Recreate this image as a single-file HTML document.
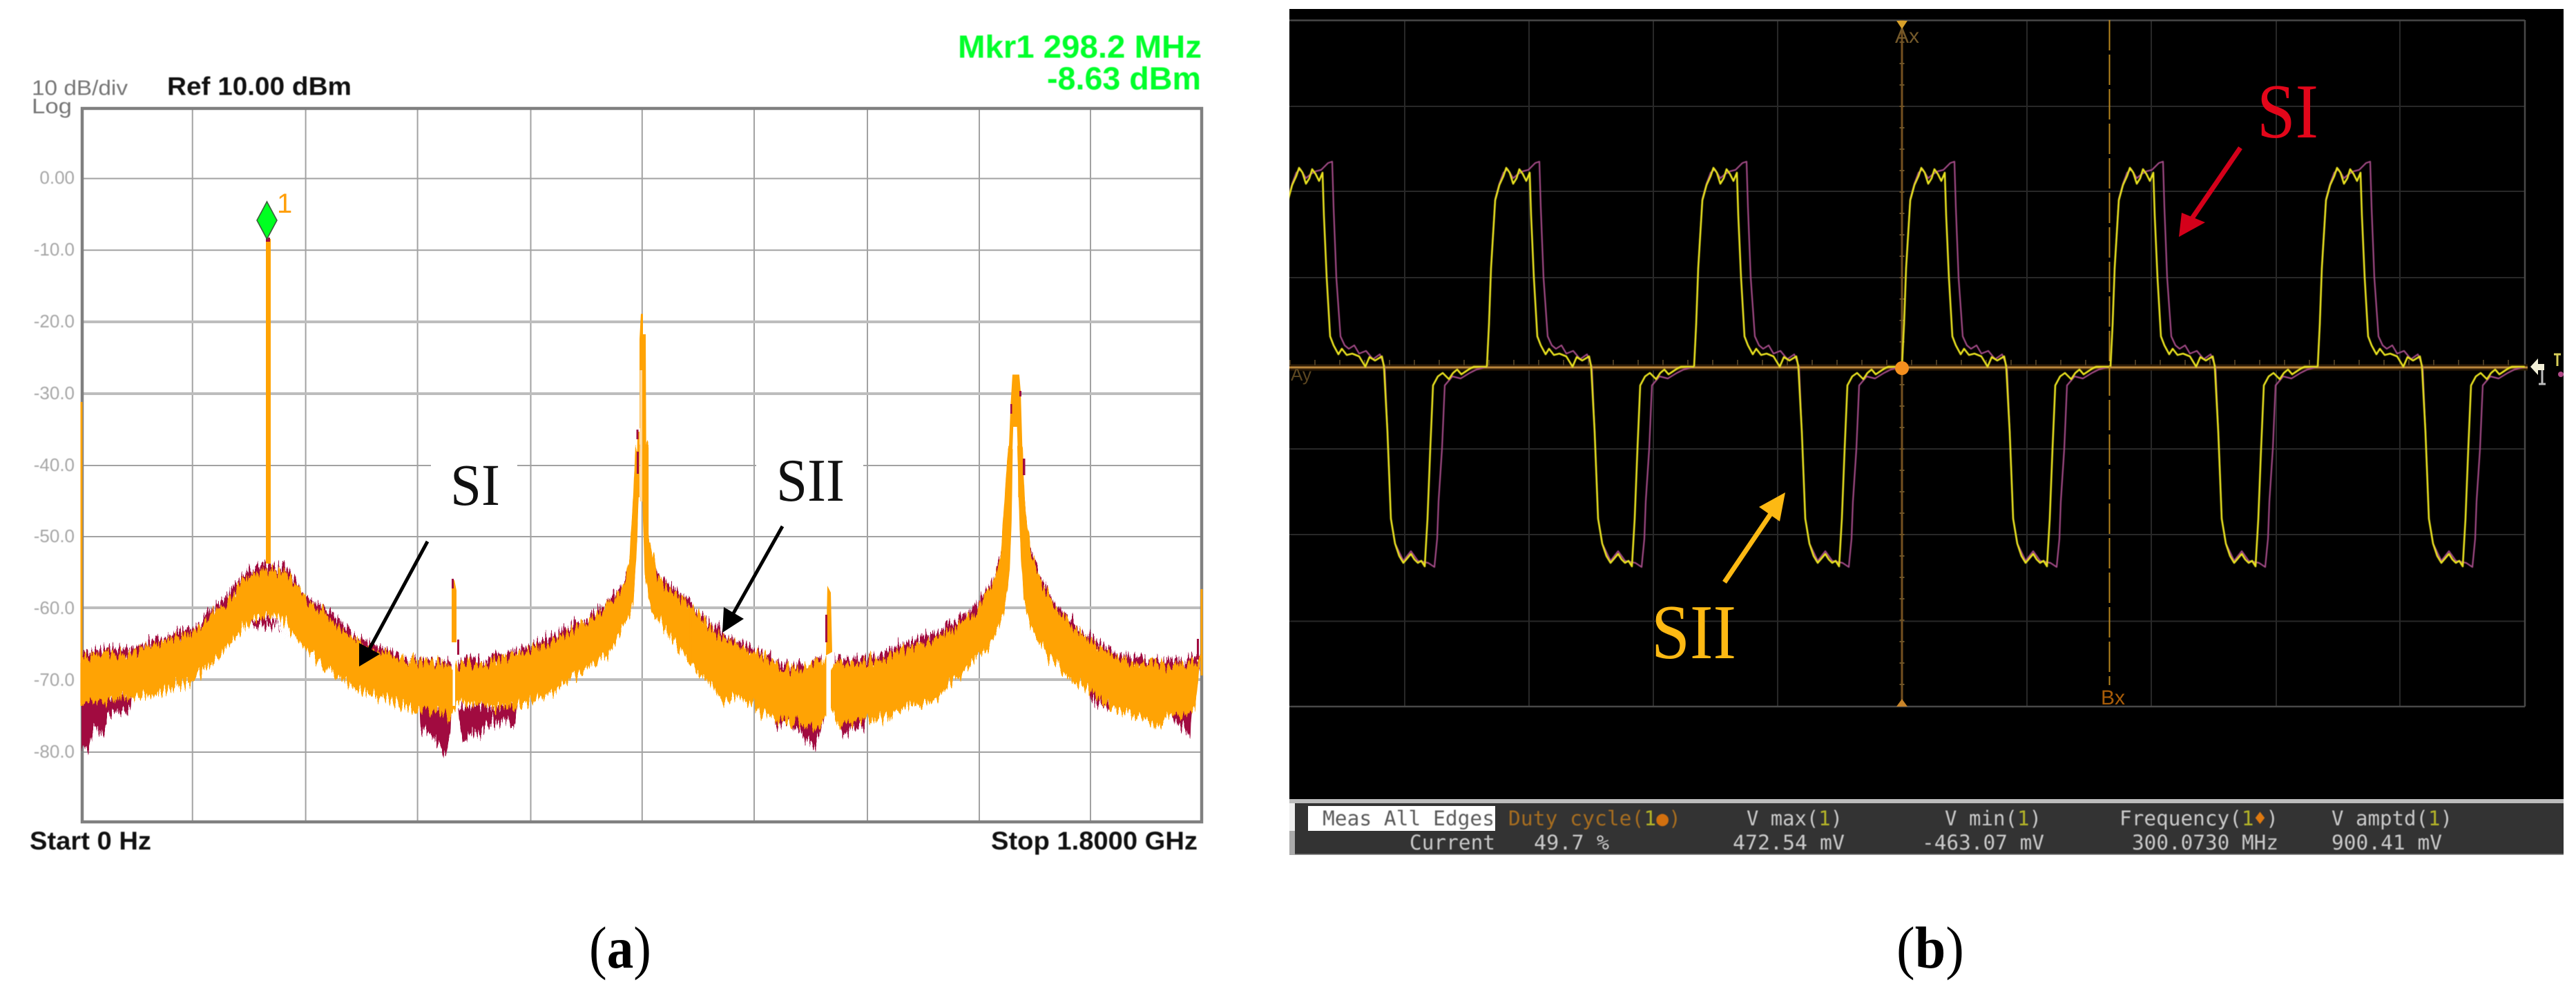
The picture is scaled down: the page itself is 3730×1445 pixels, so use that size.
<!DOCTYPE html>
<html lang="en"><head><meta charset="utf-8"><title>Spectrum and waveform</title>
<style>
html,body{margin:0;padding:0;background:#fff;width:3730px;height:1445px;overflow:hidden}
svg{display:block}
.s{font-family:"Liberation Sans",sans-serif}
.t{font-family:"Liberation Serif",serif}
.m{font-family:"DejaVu Sans Mono","Liberation Mono",monospace;font-size:29.6px}
</style></head><body>
<svg xmlns="http://www.w3.org/2000/svg" width="3730" height="1445" viewBox="0 0 3730 1445">
<defs>
<filter id="j1" filterUnits="userSpaceOnUse" x="100" y="630" width="1660" height="480" color-interpolation-filters="sRGB">
<feTurbulence type="fractalNoise" baseFrequency="0.3 0.012" numOctaves="2" seed="4" result="n"/>
<feColorMatrix in="n" type="matrix" values="1 0 0 0 0 0 0 0 0 0.5 0 0 0 0 0.5 0 0 0 0 1" result="m"/>
<feDisplacementMap in="SourceGraphic" in2="m" scale="40" xChannelSelector="G" yChannelSelector="R"/>
</filter>
<filter id="j2" filterUnits="userSpaceOnUse" x="100" y="630" width="1660" height="480" color-interpolation-filters="sRGB">
<feTurbulence type="fractalNoise" baseFrequency="0.4 0.015" numOctaves="2" seed="11" result="n"/>
<feColorMatrix in="n" type="matrix" values="1 0 0 0 0 0 0 0 0 0.5 0 0 0 0 0.5 0 0 0 0 1" result="m"/>
<feDisplacementMap in="SourceGraphic" in2="m" scale="40" xChannelSelector="G" yChannelSelector="R"/>
</filter>
<clipPath id="sc"><rect x="1867" y="13" width="1793" height="1140"/></clipPath>
<polyline id="yel" fill="none" stroke="#e9e21f" stroke-width="2.6" stroke-linejoin="round" points="0,531 3,470 6,388 12,290 18,268 24,255 28,243 33,250 38,266 43,258 47,245 52,252 57,262 62,250 64,312 68,402 73,487 78,500 85,513 90,505 97,514 105,512 115,516 124,531 130,517 138,522 148,516 151,531 156,625 158,675 161,751 167,787 173,805 179,815 185,808 190,802 195,810 200,815 205,812 210,820 214,751 218,650 222,558 229,545 236,540 245,549 251,540 257,535 263,542 269,538 275,534 281,531 300,531"/>
<polyline id="mag" fill="none" stroke="#a24a86" stroke-width="2.2" stroke-linejoin="round" points="0,531 3,470 6,388 12,288 18,266 24,250 30,245 38,258 45,252 52,248 60,246 70,236 76,234 78,300 82,402 88,487 94,500 100,505 108,500 115,512 125,508 135,520 145,513 152,531 156,625 158,675 161,751 167,787 179,812 190,798 200,812 215,815 224,821 228,780 230,726 235,650 239,558 250,545 262,548 275,540 285,535 300,531"/>
</defs>

<rect width="3730" height="1445" fill="#fff"/>

<!-- LEFT CHART -->
<g fill="none" stroke="#a2a2a2" stroke-width="2">
<path d="M278.7 157V1190M442.6 157V1190M604.6 157V1190M768.5 157V1190M929.8 157V1190M1092 157V1190M1256 157V1190M1418 157V1190M1579 157V1190"/>
<path d="M119 258.5H1740M119 362.3H1740M119 674H1740M119 777H1740M119 1089H1740"/>
</g>
<path d="M119 466H1740M119 570H1740M119 880H1740M119 984H1740" stroke="#bdbdbd" stroke-width="4" fill="none"/>
<rect x="119" y="157" width="1621" height="1033" fill="none" stroke="#808080" stroke-width="4.5"/>

<!-- white label backgrounds -->
<rect x="624" y="660" width="125" height="85" fill="#fff"/>
<rect x="1095" y="655" width="155" height="80" fill="#fff"/>

<!-- crimson noise -->
<g filter="url(#j2)" fill="#a10b40">
<g transform="translate(0,650) scale(.6378,.5071)">
<polygon points="185,585 240,570 300,570 350,545 400,525 440,510 470,470 520,415 550,355 600,332 650,335 690,415 740,462 800,528 860,565 920,600 1000,605 1025,615 1025,655 1000,645 920,640 860,605 800,568 740,502 690,455 650,375 600,372 550,395 520,455 470,510 440,550 400,565 350,585 300,610 240,610 185,625"/>
<polygon points="1040,605 1100,600 1200,565 1280,520 1360,458 1420,380 1436,310 1440,400 1370,500 1290,560 1210,605 1100,640 1040,645"/>
<polygon points="1470,330 1490,345 1520,395 1568,432 1568,470 1520,435 1490,385 1475,370"/>
<polygon points="185,700 185,860 200,860 215,790 235,820 245,750 295,745 300,700"/>
<polygon points="950,700 955,800 975,812 1000,850 1012,878 1022,820 1025,740"/>
<polygon points="1040,730 1050,838 1070,812 1090,818 1110,780 1170,788 1175,730"/>
<polygon points="550,480 600,505 640,515 680,560 600,470"/>
</g>
<g transform="translate(1000,650) scale(.5421,.5071)">
<polygon points="0,432 50,500 100,535 150,560 200,585 250,615 300,620 350,595 350,635 300,660 250,655 200,625 150,600 100,575 50,540 0,472"/>
<polygon points="385,600 430,600 500,590 560,560 640,530 700,500 760,450 810,370 830,290 838,350 815,410 765,490 705,540 645,570 565,600 505,630 430,640 385,640"/>
<polygon points="905,275 940,380 980,455 1040,515 1100,560 1150,590 1250,605 1340,600 1360,585 1360,625 1340,640 1250,645 1150,630 1100,600 1040,555 980,495 940,420 905,315"/>
<polygon points="225,740 225,795 260,770 290,810 330,850 345,810 358,760 358,700"/>
<polygon points="395,740 405,820 440,795 460,795 490,745"/>
<polygon points="1280,745 1300,790 1335,818 1340,740"/>
<polygon points="1060,660 1070,710 1110,745 1120,720"/>
</g>
</g>

<!-- orange noise -->
<g filter="url(#j1)" fill="#ffa304" stroke="#ffa304" stroke-width="5">
<g transform="translate(0,650) scale(.6378,.5071)">
<polygon points="185,600 240,585 300,585 350,560 400,540 440,525 470,490 520,430 550,375 600,350 650,355 690,430 740,480 800,545 860,580 920,610 1000,612 1025,625 1040,615 1100,610 1200,580 1280,535 1360,475 1420,395 1432,310 1440,130 1445,0 1450,0 1448,140 1442,310 1435,450 1380,585 1300,650 1260,690 1170,740 1100,735 1040,720 1020,760 960,740 900,720 815,690 750,635 700,580 640,480 600,470 550,510 500,590 430,665 350,700 300,705 240,720 185,725"/>
<polygon points="1458,0 1470,0 1470,250 1490,365 1520,410 1568,450 1568,610 1520,530 1480,460 1466,350 1462,200"/>
</g>
<g transform="translate(1000,650) scale(.5421,.5071)">
<polygon points="0,450 50,515 100,550 150,575 200,600 250,630 300,632 350,610 385,612 430,615 500,605 560,580 640,550 700,520 760,470 810,385 830,305 838,185 845,60 850,0 858,0 855,200 850,350 840,430 830,480 800,560 760,600 700,660 650,720 580,730 510,770 450,770 400,780 380,750 360,760 340,800 300,780 250,780 190,750 130,700 90,720 50,660 0,610"/>
<polygon points="875,0 885,0 890,150 905,290 940,395 980,470 1040,530 1100,575 1150,605 1250,620 1340,615 1360,600 1355,640 1345,745 1240,780 1180,760 1120,740 1070,690 1020,660 960,590 920,530 892,440 882,250"/>
</g>
</g>

<!-- spikes -->
<rect x="385" y="346" width="7" height="470" fill="#ffa304"/>
<rect x="385" y="344" width="6" height="6" fill="#a10b40"/>
<rect x="116.5" y="582" width="3" height="440" fill="#ffa304"/>
<rect x="1738.5" y="853" width="3" height="125" fill="#ffa304"/>
<rect x="1733" y="925" width="3" height="30" fill="#a10b40"/>
<polygon points="921.6,720 923,625 926,625 926,491 928,454.5 931,454.5 931,484 935,484 936,720 931,720 930,620 926,620 926,720" fill="#ffa304"/>
<rect x="926.5" y="536" width="3.5" height="190" fill="#ffd79a"/>
<rect x="921.5" y="622" width="3" height="14" fill="#a10b40"/>
<rect x="922" y="654" width="3" height="32" fill="#a10b40"/>
<polygon points="1460.7,720 1460.7,652 1463.4,585 1466,542.4 1475.9,542.4 1478,567 1479.7,625 1482.4,720 1474.3,720 1474.3,670 1472.6,618 1467.2,618 1466,652 1465,720" fill="#ffa304"/>
<rect x="1481" y="664" width="3.5" height="24" fill="#a10b40"/>
<rect x="1463" y="585" width="2.5" height="14" fill="#a10b40"/>
<rect x="1476" y="566" width="3" height="8" fill="#a10b40"/>
<polygon points="654,840 658,840 661,855 661,930 654,930" fill="#ffa304"/>
<rect x="654" y="838" width="3" height="14" fill="#a10b40"/>
<rect x="662" y="926" width="3" height="22" fill="#a10b40"/>
<rect x="655.5" y="934" width="3.5" height="88" fill="#fff"/>
<polygon points="1198,848 1203,858 1205,944 1196,949" fill="#ffa304"/>
<rect x="1195" y="890" width="3" height="40" fill="#a10b40"/>
<rect x="1196.5" y="949" width="6.5" height="92" fill="#fff"/>

<!-- marker -->
<polygon points="386.5,292 401,319 386.5,346 372,319" fill="#00ff21" stroke="#3d5c3d" stroke-width="1.6"/>
<text class="s" x="401" y="308" font-size="40" fill="#ff9f0a">1</text>

<!-- annotations left -->
<text class="t" x="652" y="731" font-size="86" textLength="72" lengthAdjust="spacingAndGlyphs" fill="#111">SI</text>
<text class="t" x="1124" y="725" font-size="88" textLength="99" lengthAdjust="spacingAndGlyphs" fill="#111">SII</text>
<line x1="619" y1="784" x2="532" y2="945" stroke="#000" stroke-width="5"/>
<polygon points="520,965 520,931 550,947" fill="#000"/>
<line x1="1133" y1="762" x2="1058" y2="895" stroke="#000" stroke-width="5"/>
<polygon points="1046,916 1048,879 1077,896" fill="#000"/>

<!-- chart labels -->
<g class="s" style="filter:blur(.6px)">
<text x="46" y="137.5" font-size="31" textLength="139" lengthAdjust="spacingAndGlyphs" fill="#777">10 dB/div</text>
<text x="46" y="164" font-size="31" textLength="58" lengthAdjust="spacingAndGlyphs" fill="#777">Log</text>
<text x="242" y="137.5" font-size="37" font-weight="700" textLength="267" lengthAdjust="spacingAndGlyphs" fill="#111">Ref 10.00 dBm</text>
<text x="1387" y="83.5" font-size="46" font-weight="700" textLength="353" lengthAdjust="spacingAndGlyphs" fill="#00ff2a">Mkr1 298.2 MHz</text>
<text x="1516" y="129.5" font-size="46" font-weight="700" textLength="223" lengthAdjust="spacingAndGlyphs" fill="#00ff2a">-8.63 dBm</text>
<text x="43" y="1230" font-size="37" font-weight="700" textLength="176" lengthAdjust="spacingAndGlyphs" fill="#111">Start 0 Hz</text>
<text x="1435" y="1230" font-size="37" font-weight="700" textLength="299" lengthAdjust="spacingAndGlyphs" fill="#111">Stop 1.8000 GHz</text>
<g font-size="26" fill="#a6a6a6" text-anchor="end">
<text x="108" y="266">0.00</text>
<text x="108" y="370">-10.0</text>
<text x="108" y="474">-20.0</text>
<text x="108" y="578">-30.0</text>
<text x="108" y="682">-40.0</text>
<text x="108" y="785">-50.0</text>
<text x="108" y="889">-60.0</text>
<text x="108" y="993">-70.0</text>
<text x="108" y="1097">-80.0</text>
</g>
</g>

<!-- SCOPE -->
<rect x="1867" y="13" width="1845" height="1225" fill="#000"/>
<g fill="none" stroke="#282828" stroke-width="2">
<path d="M2034 29V1023M2214 29V1023M2394 29V1023M2574 29V1023M2935 29V1023M3115 29V1023M3296 29V1023M3475 29V1023"/>
<path d="M1867 154H3656M1867 277H3656M1867 402H3656M1867 650H3656M1867 774H3656M1867 899.5H3656"/>
</g>
<path d="M1867 29.5H3656M3656 29V1023M1867 1023H3656" fill="none" stroke="#484848" stroke-width="2.5"/>
<!-- zero line and ticks -->
<line x1="1867" y1="532" x2="3660" y2="532" stroke="#2e1c06" stroke-width="9"/>
<line x1="1867" y1="525" x2="3660" y2="525" stroke="#4a3a20" stroke-width="8" stroke-dasharray="2 34"/>
<line x1="1867" y1="532" x2="3660" y2="532" stroke="#b9853c" stroke-width="3"/>
<line x1="2754" y1="29" x2="2754" y2="1023" stroke="#74501f" stroke-width="3"/>
<line x1="2754" y1="29" x2="2754" y2="1023" stroke="#6e5428" stroke-width="7" stroke-dasharray="2 29"/>
<text class="s" x="2744" y="62" font-size="30" fill="#74592a">Ax</text>
<polygon points="2746,30 2762,30 2754,42" fill="#d8a02a"/>
<polygon points="2746,1023 2762,1023 2754,1012" fill="#c9852a"/>
<text class="s" x="1869" y="551" font-size="26" fill="#5c4620">Ay</text>
<line x1="3054.5" y1="29" x2="3054.5" y2="992" stroke="#b8861e" stroke-width="2" stroke-dasharray="44 6"/>
<text class="s" x="3042" y="1020" font-size="30" fill="#a85c08">Bx</text>
<!-- traces -->
<g clip-path="url(#sc)" style="filter:blur(.5px)">
<use href="#mag" x="1853"/><use href="#mag" x="2153"/><use href="#mag" x="2453"/><use href="#mag" x="2754"/><use href="#mag" x="3056"/><use href="#mag" x="3356"/>
<use href="#yel" x="1853"/><use href="#yel" x="2153"/><use href="#yel" x="2453"/><use href="#yel" x="2754"/><use href="#yel" x="3056"/><use href="#yel" x="3356"/>
</g>
<circle cx="2754" cy="533" r="10" fill="#f58f1e"/>
<!-- right side markers -->
<polygon points="3664,531 3675,519 3675,527 3684,527 3684,536 3675,536 3675,543" fill="#f2efd8"/>
<path d="M3681 536V556M3676 556H3686" stroke="#bdbdbd" stroke-width="3" fill="none"/>
<path d="M3698 513H3708M3703 513V530" stroke="#d9cf5a" stroke-width="3" fill="none"/>
<circle cx="3708" cy="542" r="4" fill="#b04a88"/>
<!-- annotations -->
<text class="t" x="3268" y="199" font-size="112" textLength="89" lengthAdjust="spacingAndGlyphs" fill="#e3061a">SI</text>
<line x1="3244" y1="214" x2="3170" y2="322" stroke="#d4001a" stroke-width="7"/>
<polygon points="3155,343 3159,308 3193,322" fill="#d4001a"/>
<text class="t" x="2391" y="953" font-size="112" textLength="123" lengthAdjust="spacingAndGlyphs" fill="#fdb913">SII</text>
<line x1="2497" y1="843" x2="2568" y2="738" stroke="#fdb913" stroke-width="7"/>
<polygon points="2585,713 2547,734 2577,755" fill="#fdb913"/>
<!-- status bar -->
<rect x="1867" y="1157" width="1845" height="6" fill="#bcbcbc"/>
<rect x="1875" y="1163" width="1837" height="75" fill="#333"/>
<rect x="1867" y="1163" width="8" height="40" fill="#eee"/>
<rect x="1867" y="1203" width="8" height="35" fill="#aaa"/>
<rect x="1875" y="1236.5" width="1837" height="1.5" fill="#999"/>
<rect x="1894" y="1167" width="271" height="36" fill="#fff"/>
<g class="m" style="filter:blur(.5px)" fill="#c9c9c9">
<text x="1915" y="1195" textLength="249" lengthAdjust="spacingAndGlyphs" fill="#5a5a5a">Meas All Edges</text>
<text x="2184" y="1195" textLength="250" lengthAdjust="spacingAndGlyphs" fill="#a66d20">Duty cycle(<tspan fill="#b4b428">1</tspan><tspan fill="#d2700f">●</tspan>)</text>
<text x="2529" y="1195" textLength="139" lengthAdjust="spacingAndGlyphs">V max(<tspan fill="#b4b428">1</tspan>)</text>
<text x="2816" y="1195" textLength="140" lengthAdjust="spacingAndGlyphs">V min(<tspan fill="#b4b428">1</tspan>)</text>
<text x="3069" y="1195" textLength="230" lengthAdjust="spacingAndGlyphs">Frequency(<tspan fill="#b4b428">1</tspan><tspan fill="#e07a10">♦</tspan>)</text>
<text x="3376" y="1195" textLength="175" lengthAdjust="spacingAndGlyphs">V amptd(<tspan fill="#b4b428">1</tspan>)</text>
<text x="2041" y="1230" textLength="124" lengthAdjust="spacingAndGlyphs">Current</text>
<text x="2221" y="1230" textLength="109" lengthAdjust="spacingAndGlyphs">49.7 %</text>
<text x="2509" y="1230" textLength="162" lengthAdjust="spacingAndGlyphs">472.54 mV</text>
<text x="2783" y="1230" textLength="177" lengthAdjust="spacingAndGlyphs">-463.07 mV</text>
<text x="3087" y="1230" textLength="212" lengthAdjust="spacingAndGlyphs">300.0730 MHz</text>
<text x="3376" y="1230" textLength="160" lengthAdjust="spacingAndGlyphs">900.41 mV</text>
</g>

<!-- captions -->
<text class="t" x="853" y="1401" font-size="86" textLength="90" lengthAdjust="spacingAndGlyphs" fill="#000">(<tspan font-weight="700">a</tspan>)</text>
<text class="t" x="2746" y="1401" font-size="86" textLength="98" lengthAdjust="spacingAndGlyphs" fill="#000">(<tspan font-weight="700">b</tspan>)</text>
</svg>
</body></html>
